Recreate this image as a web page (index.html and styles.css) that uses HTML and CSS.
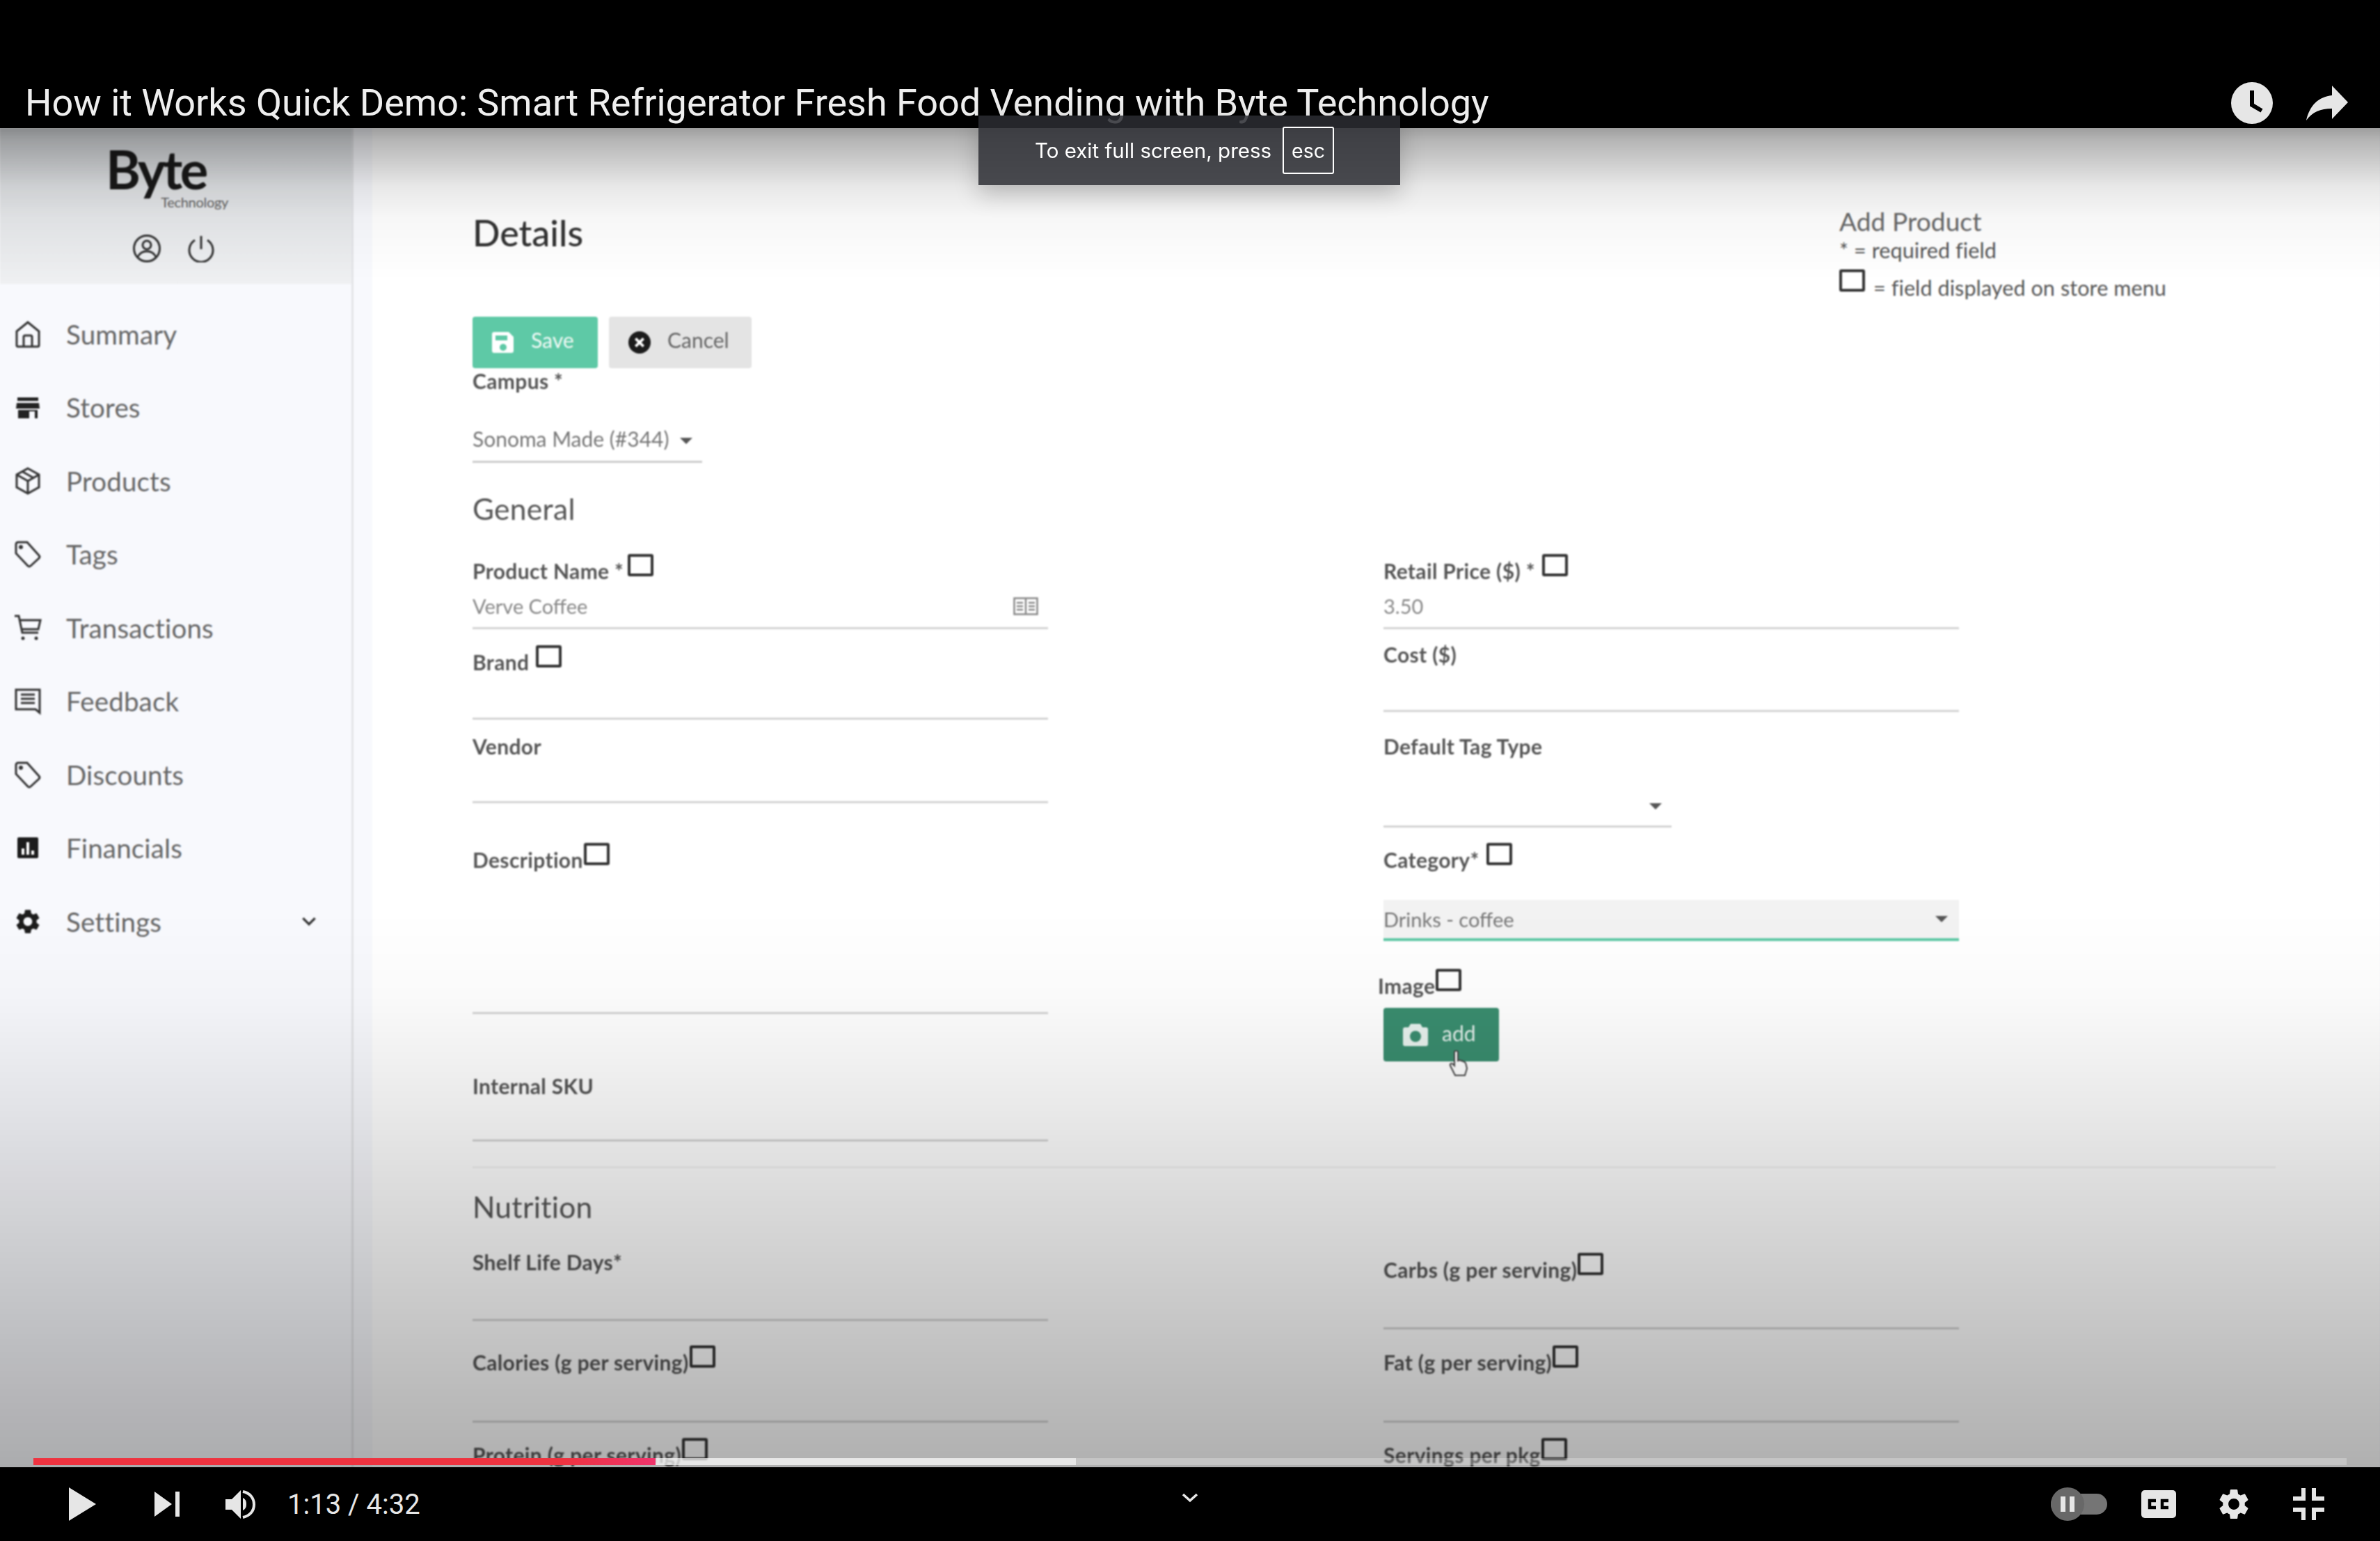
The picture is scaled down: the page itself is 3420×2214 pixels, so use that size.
FILE: index.html
```html
<!DOCTYPE html>
<html lang="en">
<head>
    <meta charset="UTF-8">
    <title>How it Works Quick Demo: Smart Refrigerator Fresh Food Vending with Byte Technology</title>
    <link rel="stylesheet" href="styles.css">
</head>
<body>
<div class="player">
    <header class="title-bar">
        <h1 class="video-title">How it Works Quick Demo: Smart Refrigerator Fresh Food Vending with Byte Technology</h1>
        <svg class="ic-clock" viewBox="0 0 60 60"><circle cx="30" cy="30" r="30" fill="#e6e6e6"/><path d="M27 12h6v19l12.500 7.500-3 5L27 34.500z" fill="#000"/></svg>
        <svg class="ic-share" viewBox="0 0 60 50"><path d="M0 50C5 28 18 16 37 14V0l23 24-23 24V33C20 33 9 38 0 50z" fill="#e6e6e6"/></svg>
    </header>

    <div class="toast">
        <span>To exit full screen, press</span>
        <span class="key">esc</span>
    </div>

    <section class="video">
        <div class="video-frame">
            <aside class="sidebar">
                <div class="brand">
                    <div class="logo">
                        <span class="logo-name">Byte</span>
                        <span class="logo-sub">Technology</span>
                    </div>
                    <div class="brand-icons">
                        <svg class="ic-user" viewBox="0 0 42 42" fill="none" stroke="#333" stroke-width="3"><circle cx="21" cy="21" r="18.500"/><circle cx="21" cy="16" r="6"/><path d="M8 33c3-6 8-8 13-8s10 2 13 8"/></svg>
                        <svg class="ic-power" viewBox="0 0 38 40" fill="none" stroke="#333" stroke-width="3"><path d="M19 2v19"/><path d="M10 8a17 17 0 1 0 18 0"/></svg>
                    </div>
                </div>
                <nav class="nav">
                    <a class="nav-item">
                        <svg class="nav-ic" viewBox="0 0 42 42" fill="none" stroke="#333" stroke-width="3"><path d="M5 17 21 4l16 13v20a2 2 0 0 1-2 2H7a2 2 0 0 1-2-2z"/><path d="M15 39V25a2 2 0 0 1 2-2h8a2 2 0 0 1 2 2v14"/></svg>
                        Summary
                    </a>
                    <a class="nav-item">
                        <svg class="nav-ic" viewBox="0 0 42 42" fill="#222"><path d="M6 7h30v5H6z"/><path d="M5 15h32l1 8H4z"/><path fill-rule="evenodd" d="M7 25h28v12H7zm16 2v10h8V27z"/></svg>
                        Stores
                    </a>
                    <a class="nav-item">
                        <svg class="nav-ic" viewBox="0 0 42 42" fill="none" stroke="#333" stroke-width="3"><path d="M21 3 37 12v18L21 39 5 30V12z"/><path d="M5 12l16 9 16-9M21 21v18M13 7.500l16 9"/></svg>
                        Products
                    </a>
                    <a class="nav-item">
                        <svg class="nav-ic" viewBox="0 0 42 42" fill="none" stroke="#333" stroke-width="3"><path d="M4 7a3 3 0 0 1 3-3h13l17 19a3 3 0 0 1 0 4L25 38a3 3 0 0 1-4 0L4 20z"/><circle cx="11" cy="11" r="1.500" fill="#333"/></svg>
                        Tags
                    </a>
                    <a class="nav-item">
                        <svg class="nav-ic" viewBox="0 0 42 42" fill="none" stroke="#333" stroke-width="3"><path d="M2 4h6l5 24h23"/><path d="M9 10h30l-3 13H12"/><circle cx="14" cy="36" r="2.500" fill="#333" stroke="none"/><circle cx="33" cy="36" r="2.500" fill="#333" stroke="none"/></svg>
                        Transactions
                    </a>
                    <a class="nav-item">
                        <svg class="nav-ic" viewBox="0 0 42 42" fill="none" stroke="#333" stroke-width="3"><path d="M4 5h34v33l-6-5H4z"/><path d="M11 12h20M11 18h20M11 24h20"/></svg>
                        Feedback
                    </a>
                    <a class="nav-item">
                        <svg class="nav-ic" viewBox="0 0 42 42" fill="none" stroke="#333" stroke-width="3"><path d="M4 7a3 3 0 0 1 3-3h13l17 19a3 3 0 0 1 0 4L25 38a3 3 0 0 1-4 0L4 20z"/><circle cx="11" cy="11" r="1.500" fill="#333"/></svg>
                        Discounts
                    </a>
                    <a class="nav-item">
                        <svg class="nav-ic" viewBox="0 0 42 42"><rect x="6" y="6" width="30" height="30" rx="2" fill="#1c1c1c"/><path d="M12 22h4v9h-4zM19 13h4v18h-4zM26 25h4v6h-4z" fill="#fff"/></svg>
                        Financials
                    </a>
                    <a class="nav-item">
                        <svg class="nav-ic" viewBox="0 0 24 24" fill="#1c1c1c"><path d="M19.140 12.940c.04-.3.06-.61.06-.94 0-.32-.02-.64-.07-.94l2.030-1.580a.49.49 0 0 0 .12-.61l-1.920-3.320a.488.488 0 0 0-.59-.22l-2.390.96c-.5-.38-1.030-.7-1.620-.94l-.36-2.540a.484.484 0 0 0-.48-.41h-3.840c-.24 0-.43.17-.47.41l-.36 2.540c-.59.24-1.130.57-1.620.94l-2.390-.96c-.22-.08-.47 0-.59.22L2.740 8.870c-.12.21-.08.47.12.61l2.030 1.580c-.05.3-.09.63-.09.94s.02.64.07.94l-2.030 1.580a.49.49 0 0 0-.12.61l1.920 3.320c.12.22.37.29.59.22l2.390-.96c.5.38 1.030.7 1.620.94l.36 2.540c.05.24.24.41.48.41h3.840c.24 0 .44-.17.47-.41l.36-2.540c.59-.24 1.130-.56 1.620-.94l2.390.96c.22.08.47 0 .59-.22l1.920-3.320c.12-.22.07-.47-.12-.61l-2.010-1.580zM12 15.600c-1.980 0-3.600-1.620-3.600-3.600s1.620-3.600 3.600-3.600 3.600 1.620 3.600 3.600-1.620 3.600-3.600 3.600z"/></svg>
                        Settings
                        <svg class="nav-chevron" viewBox="0 0 20 12" fill="none" stroke="#333" stroke-width="3"><path d="M2 2l8 8 8-8"/></svg>
                    </a>
                </nav>
            </aside>

            <main class="content">
                <div class="head">
                    <h2 class="head-title">Details</h2>
                    <div class="note">
                        <div class="note-title">Add Product</div>
                        <div class="note-line">* = required field</div>
                        <div class="note-line note-box"><span class="chk"></span><span>= field displayed on store menu</span></div>
                    </div>
                </div>

                <div class="actions">
                    <button class="btn btn-save">
                        <svg class="btn-ic" viewBox="0 0 32 32"><path fill-rule="evenodd" d="M3 1h21l7 7v20a3 3 0 0 1-3 3H3a3 3 0 0 1-3-3V4a3 3 0 0 1 3-3zm2 5v7h17V6zm11 12a5 5 0 1 0 0 10 5 5 0 0 0 0-10z" fill="#fff"/></svg>
                        Save
                    </button>
                    <button class="btn btn-cancel">
                        <svg class="btn-ic" viewBox="0 0 34 34"><circle cx="17" cy="17" r="17" fill="#1c1c1c"/><path d="M11 11l12 12M23 11 11 23" stroke="#fff" stroke-width="4"/></svg>
                        Cancel
                    </button>
                </div>

                <div class="label label-campus">Campus *</div>
                <div class="select-campus">
                    <span>Sonoma Made (#344)</span>
                    <span class="caret"></span>
                </div>

                <h3 class="section-title">General</h3>

                <div class="columns">
                    <div class="col">
                        <div class="field f-product">
                            <div class="label">Product Name *<span class="chk chk-near"></span></div>
                            <div class="value">Verve Coffee
                                <svg class="ic-card" viewBox="0 0 36 26" fill="none" stroke="#888" stroke-width="2.500"><rect x="1.500" y="1.500" width="33" height="23"/><path d="M18 2v22M22 8h9M22 13h9M22 18h9M5 8h9M5 13h9M5 18h9"/></svg>
                            </div>
                        </div>
                        <div class="field f-brand"><div class="label">Brand<span class="chk"></span></div></div>
                        <div class="field f-vendor"><div class="label">Vendor</div></div>
                        <div class="field f-desc"><div class="label">Description<span class="chk chk-tight"></span></div></div>
                        <div class="field f-sku"><div class="label">Internal SKU</div></div>
                    </div>
                    <div class="col">
                        <div class="field f-product">
                            <div class="label">Retail Price ($) *<span class="chk"></span></div>
                            <div class="value">3.50</div>
                        </div>
                        <div class="field f-cost"><div class="label">Cost ($)</div></div>
                        <div class="field f-tag">
                            <div class="label">Default Tag Type</div>
                            <span class="caret caret-end"></span>
                        </div>
                        <div class="f-category">
                            <div class="label">Category*<span class="chk"></span></div>
                            <div class="select-active">
                                <span>Drinks - coffee</span>
                                <span class="caret"></span>
                            </div>
                        </div>
                        <div class="f-image">
                            <div class="label label-image">Image<span class="chk chk-tight"></span></div>
                            <button class="btn btn-add">
                                <svg class="btn-ic-add" viewBox="0 0 36 32"><path fill-rule="evenodd" d="M11 0h14l3 5h5a3 3 0 0 1 3 3v21a3 3 0 0 1-3 3H3a3 3 0 0 1-3-3V8a3 3 0 0 1 3-3h5zm7 10a8 8 0 1 0 0 16 8 8 0 0 0 0-16z" fill="#e8f2ee"/></svg>
                                add
                            </button>
                            <svg class="ic-hand" viewBox="0 0 28 38"><path d="M8 3a2.500 2.500 0 0 1 5 0v12l2-1 3 1 3 1 3 2 2 8-3 10H9L2 22c-1-3 2-4 4-2l2 2z" fill="#fff" stroke="#444" stroke-width="2"/></svg>
                        </div>
                    </div>
                </div>

                <div class="divider"></div>

                <h3 class="section-title section-nutrition">Nutrition</h3>

                <div class="columns">
                    <div class="col">
                        <div class="field f-shelf"><div class="label">Shelf Life Days*</div></div>
                        <div class="field f-calories"><div class="label">Calories (g per serving)<span class="chk chk-tight"></span></div></div>
                        <div class="field f-next"><div class="label">Protein (g per serving)<span class="chk chk-tight"></span></div></div>
                    </div>
                    <div class="col">
                        <div class="field f-carbs"><div class="label">Carbs (g per serving)<span class="chk chk-tight"></span></div></div>
                        <div class="field f-fat"><div class="label">Fat (g per serving)<span class="chk chk-tight"></span></div></div>
                        <div class="field f-next"><div class="label">Servings per pkg<span class="chk chk-tight"></span></div></div>
                    </div>
                </div>
            </main>
        </div>

        <div class="shade-top"></div>
        <div class="shade-bottom"></div>

        <div class="progress">
            <div class="progress-played"></div>
            <div class="progress-buffer"></div>
        </div>
    </section>

    <footer class="controls">
        <div class="controls-left">
            <svg class="ic-play" viewBox="0 0 39 48"><path d="M0 0l39 24L0 48z" fill="#e6e6e6"/></svg>
            <svg class="ic-next" viewBox="0 0 36 36"><path d="M0 0l25 18L0 36zM30 0h6v36h-6z" fill="#e6e6e6"/></svg>
            <svg class="ic-volume" viewBox="0 0 43 41"><path d="M0 13h9L22 0v41L9 28H0z" fill="#e6e6e6"/><path d="M25 11c4 2 5 5 5 9s-1 7-5 9z" fill="#e6e6e6"/><path d="M25 2c10 2 16 9 16 18.500S35 37 25 39" fill="none" stroke="#e6e6e6" stroke-width="4"/></svg>
            <span class="time">1:13 / 4:32</span>
        </div>
        <svg class="ic-chevron" viewBox="0 0 24 14" fill="none" stroke="#e6e6e6" stroke-width="3.500"><path d="M2 2l10 9 10-9"/></svg>
        <div class="controls-right">
            <div class="toggle">
                <div class="toggle-knob"><span></span><span></span></div>
            </div>
            <svg class="ic-cc" viewBox="0 0 50 40"><rect width="50" height="40" rx="5" fill="#e6e6e6"/><path d="M21 15h-9v10h9M39 15h-9v10h9" fill="none" stroke="#000" stroke-width="4.500"/></svg>
            <svg class="ic-gear" viewBox="2 1.500 20 21" fill="#e6e6e6"><path d="M19.140 12.940c.04-.3.06-.61.06-.94 0-.32-.02-.64-.07-.94l2.030-1.580a.49.49 0 0 0 .12-.61l-1.920-3.320a.488.488 0 0 0-.59-.22l-2.390.96c-.5-.38-1.030-.7-1.620-.94l-.36-2.540a.484.484 0 0 0-.48-.41h-3.840c-.24 0-.43.17-.47.41l-.36 2.540c-.59.24-1.130.57-1.620.94l-2.390-.96c-.22-.08-.47 0-.59.22L2.740 8.870c-.12.21-.08.47.12.61l2.030 1.580c-.05.3-.09.63-.09.94s.02.64.07.94l-2.030 1.580a.49.49 0 0 0-.12.61l1.920 3.320c.12.22.37.29.59.22l2.390-.96c.5.38 1.030.7 1.620.94l.36 2.540c.05.24.24.41.48.41h3.840c.24 0 .44-.17.47-.41l.36-2.540c.59-.24 1.130-.56 1.620-.94l2.390.96c.22.08.47 0 .59-.22l1.920-3.320c.12-.22.07-.47-.12-.61l-2.010-1.580zM12 15.600c-1.980 0-3.600-1.620-3.600-3.600s1.620-3.600 3.600-3.600 3.600 1.620 3.600 3.600-1.620 3.600-3.600 3.600z"/></svg>
            <svg class="ic-exit" viewBox="0 0 45 46" fill="#e6e6e6"><path d="M12 0h6v18H0v-6h12zM27 0h6v12h12v6H27zM0 28h18v18h-6V34H0zM27 28h18v6H33v12h-6z"/></svg>
        </div>
    </footer>
</div>
</body>
</html>
```

FILE: styles.css
```css
* {
    box-sizing: border-box;
}
html, body {
    margin: 0;
    height: 100%;
    background: #000;
}
.player {
    position: relative;
    display: flex;
    flex-direction: column;
    width: 3420px;
    height: 2214px;
    overflow: hidden;
    font-family: Roboto, sans-serif;
}

/* title bar */
.title-bar {
    display: flex;
    align-items: center;
    height: 184px;
    padding: 112px 46px 0 36px;
    background: #000;
}
.video-title {
    margin: 0 auto 0 0;
    font-size: 54px;
    font-weight: 400;
    line-height: 70px;
    letter-spacing: -.03px;
    color: #eee;
    white-space: nowrap;
}
.ic-clock {
    width: 60px;
    height: 60px;
    margin-right: 48px;
}
.ic-share {
    width: 60px;
    height: 50px;
}

/* full screen hint */
.toast {
    position: absolute;
    top: 166px;
    left: 1406px;
    z-index: 5;
    display: flex;
    align-items: center;
    gap: 16px;
    width: 606px;
    height: 100px;
    padding-left: 81px;
    background: rgba(44, 45, 50, .85);
    box-shadow: 0 12px 32px rgba(0, 0, 0, .22);
    font-family: Inter, sans-serif;
    font-size: 29.500px;
    color: #fff;
}
.key {
    display: flex;
    align-items: center;
    justify-content: center;
    width: 74px;
    height: 68px;
    border: 2px solid #fff;
    border-radius: 3px;
    font-size: 28.500px;
}

/* video area */
.video {
    position: relative;
    flex: 1;
    overflow: hidden;
    background: #f8f9fd;
}
.video-frame {
    display: flex;
    height: 100%;
    filter: blur(1px);
    font-family: Lato, sans-serif;
}
.shade-top {
    position: absolute;
    top: 0;
    left: 0;
    right: 0;
    height: 220px;
    background: linear-gradient(rgba(0, 0, 0, .38), rgba(0, 0, 0, .29) 17px, rgba(0, 0, 0, .09) 84px, rgba(0, 0, 0, .03) 130px, rgba(0, 0, 0, 0));
}
.shade-bottom {
    position: absolute;
    bottom: 0;
    left: 0;
    right: 0;
    height: 800px;
    background: linear-gradient(rgba(0, 0, 0, 0), rgba(0, 0, 0, .02) 123px, rgba(0, 0, 0, .09) 293px, rgba(0, 0, 0, .14) 405px, rgba(0, 0, 0, .265) 693px, rgba(0, 0, 0, .31));
}
.progress {
    position: absolute;
    left: 48px;
    right: 48px;
    bottom: 3px;
    display: flex;
    height: 10px;
    background: rgba(255, 255, 255, .25);
}
.progress-played {
    width: 894px;
    background: linear-gradient(90deg, #ee3340 85%, #f0346c);
}
.progress-buffer {
    width: 604px;
    background: rgba(255, 255, 255, .6);
}

/* sidebar */
.sidebar {
    flex: none;
    width: 508px;
    border-right: 3px solid #e4e5e9;
    background: #f8f9fd;
}
.brand {
    display: flex;
    flex-direction: column;
    height: 224px;
    background: linear-gradient(#dcdfe2, #eff0f2);
}
.logo {
    display: flex;
    flex-direction: column;
    width: 176px;
    margin: 26px 0 0 152px;
}
.logo-name {
    height: 66px;
    font-size: 76px;
    font-weight: 700;
    line-height: 66px;
    letter-spacing: -3.500px;
    color: #1a1a1a;
}
.logo-sub {
    align-self: flex-end;
    margin-top: 2px;
    font-size: 20px;
    line-height: 24px;
    letter-spacing: -.3px;
    color: #666;
}
.brand-icons {
    display: flex;
    align-items: center;
    gap: 38px;
    margin: 34px 0 0 190px;
}
.ic-user {
    width: 42px;
    height: 42px;
}
.ic-power {
    width: 38px;
    height: 40px;
}
.nav {
    padding-top: 19px;
}
.nav-item {
    display: flex;
    align-items: center;
    gap: 34px;
    height: 105.500px;
    padding: 0 50px 0 19px;
    font-size: 38.500px;
    letter-spacing: .15px;
    color: #666;
}
.nav-ic {
    flex: none;
    width: 42px;
    height: 42px;
}
.nav-chevron {
    width: 22px;
    height: 13px;
    margin-left: auto;
}

/* form */
.content {
    flex: 1;
    margin-left: 27px;
    padding-left: 144px;
    background: #fff;
    color: #4d4d4d;
}
.head {
    display: flex;
    height: 271px;
}
.head-title {
    margin: 120px 0 0;
    font-size: 52px;
    font-weight: 500;
    line-height: 60px;
    color: #333;
}
.note {
    width: 777px;
    margin: 112px 0 0 auto;
    font-size: 30.500px;
    letter-spacing: .1px;
    color: #555;
}
.note-title {
    font-size: 37px;
    line-height: 44px;
    color: #666;
}
.note-line {
    margin-top: 3px;
    line-height: 32px;
}
.note-box {
    display: flex;
    gap: 12px;
    margin-top: 22px;
}
.note-box .chk {
    width: 37px;
    height: 32px;
    margin: -10px 0 0 0;
}
.actions {
    display: flex;
    gap: 16px;
    height: 74px;
}
.btn {
    display: flex;
    align-items: center;
    gap: 24px;
    height: 74px;
    padding: 0 28px 8px;
    border: 0;
    border-radius: 4px;
    font-family: Lato, sans-serif;
    font-size: 30px;
}
.btn-save {
    width: 180px;
    background: #5ec9a6;
    color: #eef9f5;
}
.btn-cancel {
    width: 205px;
    gap: 24px;
    background: #e4e4e4;
    color: #666;
}
.btn-ic {
    flex: none;
    width: 32px;
    height: 32px;
    margin-top: 8px;
}
.label {
    display: flex;
    align-items: center;
    height: 40px;
    font-size: 30px;
    font-weight: 700;
    letter-spacing: .35px;
    color: #555;
    white-space: nowrap;
}
.label-campus {
    margin-top: -2px;
}
.chk {
    flex: none;
    align-self: flex-start;
    width: 37px;
    height: 32px;
    margin: -4px 0 0 10px;
    border: 4px solid #333;
    border-radius: 3px;
}
.chk-tight {
    margin-left: 1px;
}
.chk-near {
    margin-left: 6px;
}
.select-campus {
    display: flex;
    align-items: flex-end;
    justify-content: space-between;
    width: 330px;
    height: 98px;
    padding: 0 14px 12px 0;
    border-bottom: 3px solid #ccc;
    font-size: 30px;
    line-height: 40px;
    color: #777;
}
.caret {
    align-self: center;
    width: 0;
    height: 0;
    border: 9px solid transparent;
    border-top-color: #555;
    border-bottom-width: 0;
}
.select-campus .caret {
    align-self: flex-end;
    margin-bottom: 12px;
}
.section-title {
    margin: 36px 0 0;
    font-size: 42.500px;
    font-weight: 400;
    line-height: 60px;
    letter-spacing: .3px;
    color: #555;
}
.columns {
    display: flex;
    gap: 482px;
}
.col {
    display: flex;
    flex-direction: column;
    width: 827px;
}
.field {
    flex: none;
    position: relative;
    border-bottom: 3px solid #d4d4d4;
}
.value {
    display: flex;
    align-items: center;
    justify-content: space-between;
    height: 40px;
    margin-top: 10px;
    font-size: 29px;
    color: #888;
}
.ic-card {
    width: 36px;
    height: 26px;
    margin: 2px 14px 0 0;
}
.f-product { height: 104px; margin-top: 39px; }
.f-brand { height: 103px; margin-top: 27px; }
.f-vendor { height: 102px; margin-top: 18px; }
.f-desc { height: 242px; margin-top: 61px; }
.f-sku { height: 100px; margin-top: 83px; }
.f-cost { height: 103px; margin-top: 16px; }
.f-tag { width: 414px; height: 137px; margin-top: 29px; }
.caret-end {
    position: absolute;
    right: 14px;
    bottom: 23px;
}
.f-category {
    margin-top: 26px;
}
.select-active {
    display: flex;
    align-items: center;
    justify-content: space-between;
    height: 59px;
    margin-top: 38px;
    padding-right: 16px;
    border-bottom: 4px solid #5ec9a6;
    background: #f2f2f2;
    font-size: 29px;
    color: #777;
}
.f-image {
    position: relative;
    margin-top: 44px;
}
.label-image {
    margin-left: -8px;
}
.btn-add {
    width: 166px;
    height: 77px;
    margin-top: 12px;
    padding: 0 28px 6px;
    gap: 20px;
    background: #3a8d6f;
    color: #e8f2ee;
}
.btn-ic-add {
    flex: none;
    width: 36px;
    height: 32px;
    margin-top: 6px;
}
.ic-hand {
    position: absolute;
    left: 94px;
    top: 113px;
    width: 28px;
    height: 38px;
}
.divider {
    width: 2591px;
    height: 2px;
    margin-top: 36px;
    background: #efefef;
}
.section-nutrition {
    margin-top: 26px;
}
.f-shelf { height: 105px; margin-top: 29px; }
.f-calories { height: 107px; margin-top: 39px; }
.f-carbs { height: 106px; margin-top: 40px; }
.f-fat { height: 107px; margin-top: 27px; }
.f-next { height: 107px; margin-top: 26px; }

/* player controls */
.controls {
    position: relative;
    display: flex;
    align-items: center;
    justify-content: space-between;
    flex: none;
    height: 106px;
    background: #000;
}
.controls-left {
    display: flex;
    align-items: center;
    padding-left: 99px;
}
.ic-play {
    width: 39px;
    height: 48px;
}
.ic-next {
    width: 36px;
    height: 36px;
    margin-left: 84px;
}
.ic-volume {
    width: 43px;
    height: 41px;
    margin-left: 66px;
}
.time {
    margin-left: 46px;
    font-size: 40px;
    color: #e6e6e6;
}
.ic-chevron {
    position: absolute;
    left: 1698px;
    top: 37px;
    width: 24px;
    height: 14px;
}
.controls-right {
    display: flex;
    align-items: center;
    padding-right: 80px;
}
.toggle {
    position: relative;
    width: 81px;
    height: 30px;
    border-radius: 15px;
    background: #757575;
}
.toggle-knob {
    position: absolute;
    left: 0;
    top: -9px;
    display: flex;
    align-items: center;
    justify-content: center;
    gap: 6px;
    width: 48px;
    height: 48px;
    border-radius: 50%;
    background: #686868;
}
.toggle-knob span {
    width: 7px;
    height: 22px;
    background: #e6e6e6;
}
.ic-cc {
    width: 50px;
    height: 40px;
    margin-left: 49px;
}
.ic-gear {
    width: 44px;
    height: 46px;
    margin-left: 61px;
}
.ic-exit {
    width: 45px;
    height: 46px;
    margin-left: 63px;
}
```
